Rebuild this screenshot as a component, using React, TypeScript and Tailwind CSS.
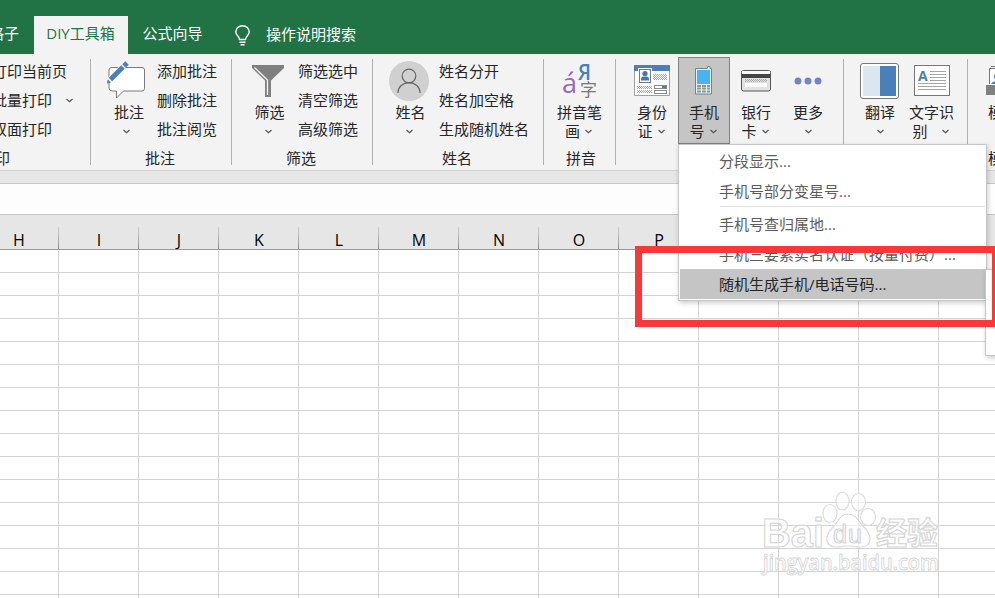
import type { ReactNode } from "react";

const columns = ["H", "I", "J", "K", "L", "M", "N", "O", "P"];
const cells = Array.from({ length: 13 }, (_, i) => i);
const rows = Array.from({ length: 16 }, (_, i) => i);

function Chevron({ className = "" }: { className?: string }) {
    return (
        <svg className={`shrink-0 ${className}`} width="7" height="5" viewBox="0 0 7 5" fill="none">
            <path d="M0.5 1 L3.5 3.8 L6.5 1" stroke="#555" strokeWidth="1.2" />
        </svg>
    );
}

function Divider() {
    return <div className="mt-px h-[106px] w-px shrink-0 bg-[#b1b1b1]" />;
}

interface GroupProps {
    className: string;
    label?: string;
    labelClass?: string;
    children: ReactNode;
}
function Group({ className, label, labelClass = "justify-center", children }: GroupProps) {
    return (
        <section className={`flex shrink-0 flex-col ${className}`}>
            <div className="flex h-[87px] shrink-0">{children}</div>
            <div className={`flex h-[27px] shrink-0 items-center ${labelClass}`}>{label}</div>
        </section>
    );
}

interface BigButtonProps {
    className: string;
    icon: ReactNode;
    label: string;
    labelClass?: string;
    second?: string;
    secondClass?: string;
}
function BigButton({ className, icon, label, labelClass = "", second, secondClass = "gap-[5px] pr-[2px]" }: BigButtonProps) {
    return (
        <button className={`flex shrink-0 flex-col items-center ${className}`}>
            <span className="flex h-[45px] w-full items-center justify-center">{icon}</span>
            <span className={`h-[19px] leading-[19px] ${labelClass}`}>{label}</span>
            <span className={`flex h-[19px] items-center leading-[19px] ${secondClass}`}>
                {second}
                <Chevron />
            </span>
        </button>
    );
}

function TextList({ items, className = "" }: { items: string[]; className?: string }) {
    return (
        <div className={`flex flex-col ${className}`}>
            {items.map((item) => (
                <button key={item} className="h-[29px] pb-[2px] text-left leading-[27px]">{item}</button>
            ))}
        </div>
    );
}

/* ------------------------------------- ICONOS */
function CommentIcon() {
    return (
        <svg className="mb-[2px]" width="40" height="40" viewBox="0 0 40 40" fill="none">
            <path d="M5 7.500h30q2.500 0 2.500 2.500v18.500q0 2.500-2.500 2.500H16.500l-7 7v-7H5q-3-.5-3-3V10q0-2.500 3-2.500z" fill="#fff" stroke="#7a7a7a" />
            <path d="M2 20.500L17 5.500" stroke="#f3f3f3" strokeWidth="6" />
            <path d="M3.500 19.500L16 7" stroke="#4a80b8" strokeWidth="4.800" />
            <path d="M17 6L20 3" stroke="#4a80b8" strokeWidth="4.800" />
            <path d="M0.800 19.500l3 3-4 1z" fill="#4a80b8" />
        </svg>
    );
}

function FilterIcon() {
    return (
        <svg width="32" height="32" viewBox="0 0 32 32">
            <path d="M0 0h32v3L19 15.500V32h-6V15.500L0 3z" fill="#808080" />
            <path d="M2.500 2.500L15.500 15v15" fill="none" stroke="#f3f3f3" strokeWidth="1.300" />
        </svg>
    );
}

function PersonIcon() {
    return (
        <svg width="40" height="40" viewBox="0 0 40 40">
            <circle cx="20" cy="20" r="20" fill="#d0d0d0" />
            <g fill="none" stroke="#666" strokeWidth="1.200">
                <circle cx="20" cy="15" r="6.800" />
                <path d="M9 32v-0.500a11 9.800 0 0 1 22 0v0.500" />
            </g>
        </svg>
    );
}

function PinyinIcon() {
    return (
        <svg width="36" height="38" viewBox="0 0 36 38">
            <text x="0" y="31" fontSize="27" fontFamily="Open Sans" fill="#9966bb">á</text>
            <text x="16" y="18" fontSize="22" fontWeight="600" fontFamily="Open Sans" textLength="13" lengthAdjust="spacingAndGlyphs" fill="#4a80b8">Я</text>
            <text x="18" y="33.500" fontSize="17" fontFamily="Noto Sans CJK SC" fill="#777">字</text>
        </svg>
    );
}

function IdCardIcon() {
    return (
        <svg width="36" height="32" viewBox="0 0 36 32">
            <rect x="0.500" y="0.500" width="35" height="30" fill="#fff" stroke="#a0a0a0" />
            <rect width="36" height="6" fill="#4a80b8" />
            <rect x="4" y="3" width="14" height="15" fill="#fff" />
            <rect x="5.500" y="4.500" width="11" height="13" fill="#fff" stroke="#777" />
            <circle cx="11" cy="8.500" r="2.600" fill="#3f79b3" />
            <path d="M7 15.500v-1.500q0-2.500 2.500-2.500h3q2.500 0 2.500 2.500v1.500z" fill="#3f79b3" />
            <path d="M19 9.500h14M19 11.500h14M19 13.500h14M3 21.500h15M3 23.500h15M3 25.500h15M3 27.500h15" stroke="#a5a5a5" strokeDasharray="1 1" />
            <path d="M20 10.500h13M20 12.500h13M20 14.500h13M4 22.500h14M4 26.500h14" stroke="#a5a5a5" strokeDasharray="1 1" />
            <rect x="20.500" y="20.500" width="12" height="3" fill="#fff" stroke="#888" />
            <rect x="28" y="21" width="4" height="2" fill="#4a80b8" />
            <rect x="20.500" y="25.500" width="12" height="3" fill="#fff" stroke="#888" />
        </svg>
    );
}

function PhoneIcon() {
    return (
        <svg width="18" height="29" viewBox="0 0 18 29">
            <path d="M0.500 2.500h12v-2h2.500v2h1.500v25.500H0.500z" fill="#e8f2f2" stroke="#6f8484" />
            <rect x="2" y="4" width="13" height="14" fill="#49b2f0" />
            <path d="M2 20h4M7 20h4M12 20h3M2 22.500h4M7 22.500h4M12 22.500h3M2 25.500h4M7 25.500h4M12 25.500h3" stroke="#869a98" strokeWidth="2" />
        </svg>
    );
}

function BankCardIcon() {
    return (
        <svg width="30" height="22" viewBox="0 0 30 22">
            <rect x="0.500" y="0.500" width="29" height="20.500" rx="2" fill="#e2e2e2" stroke="#555" />
            <rect x="1" y="1" width="28" height="3" fill="#f8f8f8" />
            <rect x="1" y="4" width="28" height="4" fill="#444" />
            <path d="M4 9.500h22M4 11.500h22" stroke="#aaa" strokeDasharray="1 1" />
            <path d="M5 10.500h21" stroke="#aaa" strokeDasharray="1 1" />
            <rect x="4" y="13" width="22" height="4" fill="#fff" />
        </svg>
    );
}

function MoreIcon() {
    return (
        <svg width="28" height="8" viewBox="0 0 28 8" fill="#7484c1">
            <circle cx="4" cy="4" r="3.500" />
            <circle cx="14" cy="4" r="3.500" />
            <circle cx="24" cy="4" r="3.500" />
        </svg>
    );
}

function TranslateIcon() {
    return (
        <svg className="mr-px" width="39" height="36" viewBox="0 0 39 36">
            <rect x="0.500" y="0.500" width="38" height="35" rx="2.500" fill="#fff" stroke="#777" />
            <rect x="3" y="3" width="17" height="30" fill="#dce6f0" />
            <rect x="20" y="3" width="16" height="30" fill="#4a80b8" />
        </svg>
    );
}

function OcrIcon() {
    return (
        <svg width="36" height="31" viewBox="0 0 36 31">
            <rect x="0.500" y="0.500" width="35" height="30" fill="#fff" stroke="#777" />
            <text x="4" y="16" fontSize="14" fontWeight="700" fontFamily="Open Sans" fill="#4a80b8">A</text>
            <path d="M16 6.500h16M16 9.500h16M16 12.500h16M16 15.500h16M4 18.500h28M4 21.500h28M4 24.500h28" stroke="#a5a5a5" />
        </svg>
    );
}

function StampIcon() {
    return (
        <svg className="shrink-0" width="20" height="30" viewBox="0 0 20 30">
            <path d="M5 0.500h15M3.500 18V2.500H20" fill="none" stroke="#777" />
            <rect x="4" y="3" width="16" height="16" fill="#fff" />
            <path d="M12 7q-4 0-4 3.500t4 4M5 18q1-3 6-3h9v3z" fill="#4a80b8" />
            <rect y="19" width="20" height="10" fill="#808080" />
        </svg>
    );
}

function Watermark() {
    return (
        <svg className="absolute left-[758px] top-[488px]" width="186" height="92" viewBox="0 0 186 92">
            <g fill="#fff" fillOpacity="0.600" stroke="#dcdcdc" strokeWidth="1.200">
                <ellipse cx="72" cy="25.500" rx="7" ry="9" />
                <ellipse cx="84.500" cy="13" rx="6.500" ry="9" />
                <ellipse cx="100.500" cy="14" rx="7" ry="8.500" />
                <ellipse cx="110" cy="29" rx="7.500" ry="8.500" />
                <path d="M90 26c-8 0-9 7-14 12s-8 11-7 15 4 6 9 6 8-1 12-1 8 1 13 1c6 0 9-3 9-8s-3-9-7-13-7-12-15-12z" />
            </g>
            <g fill="#fff" fillOpacity="0.650" stroke="#d6d6d6" strokeWidth="1.200" strokeLinejoin="round" fontFamily="Liberation Sans" fontWeight="700">
                <text x="4" y="59" fontSize="41" textLength="62" lengthAdjust="spacingAndGlyphs">Bai</text>
                <text x="75" y="55" fontSize="25" fontWeight="400" textLength="29">du</text>
                <text x="118" y="56" fontSize="31" fontFamily="Noto Sans CJK SC" textLength="62">经验</text>
                <text x="5" y="82" fontSize="21" fontFamily="Open Sans" fontWeight="600" strokeWidth="0.900" textLength="176" lengthAdjust="spacingAndGlyphs">jingyan.baidu.com</text>
            </g>
        </svg>
    );
}

function PhoneMenu() {
    return (
        <>
            <div className="absolute left-[678px] top-[144px] flex h-[157px] w-[309px] flex-col border border-[#c6c6c6] bg-white p-px text-[#5c5c5c] shadow-[1px_2px_5px_rgba(0,0,0,0.2)]">
                <button className="h-[30px] pl-[39px] text-left leading-[30px]">分段显示...</button>
                <button className="h-[30px] pl-[39px] text-left leading-[30px]">手机号部分变星号...</button>
                <div className="ml-[40px] h-px shrink-0 bg-[#e1e1e1]" />
                <button className="mt-[2px] h-[30px] pl-[39px] text-left leading-[30px]">手机号查归属地...</button>
                <button className="h-[30px] whitespace-nowrap pl-[39px] text-left leading-[30px]">手机三要素实名认证（按量付费）...</button>
                <button className="h-[30px] bg-[#c5c5c5] pl-[39px] text-left leading-[30px] text-[#262626]">随机生成手机/电话号码...</button>
            </div>
            <div className="absolute left-[985px] top-[269px] h-[87px] w-[20px] border border-[#c6c6c6] bg-white shadow-[1px_2px_5px_rgba(0,0,0,0.2)]" />
        </>
    );
}

function App() {
    return (
        <div className="relative flex h-[598px] w-[995px] flex-col overflow-hidden bg-white font-['Open_Sans','Noto_Sans_CJK_SC',sans-serif] text-[15px] text-[#262626]">
            {/* ------------------------------------- PESTAÑAS */}
            <header className="flex h-[54px] shrink-0 items-end bg-[#217346] text-white">
                <div className="flex h-[38px] w-[34px] items-center justify-end whitespace-nowrap pb-[4px] pr-[15px]">方方格子</div>
                <div className="flex h-[38px] w-[94px] items-center justify-center bg-[#f3f3f3] pb-[4px] pr-px text-[#217346]">DIY工具箱</div>
                <div className="flex h-[38px] w-[89px] items-center justify-center pb-[4px]">公式向导</div>
                <div className="flex h-[38px] items-center pl-[18px]">
                    <svg width="15" height="21" viewBox="0 0 15 21" fill="none" stroke="#fff" strokeWidth="1.400">
                        <path d="M4.500 14.500C4.500 11 0.800 10.500 0.800 7a6.700 6.300 0 0 1 13.400 0c0 3.500-3.700 4-3.700 7.500z" />
                        <path d="M4.500 17.300h6M5.500 19.800h4" />
                    </svg>
                    <span className="ml-[16px] pb-px">操作说明搜索</span>
                </div>
            </header>

            {/* ------------------------------------- CINTA */}
            <div className="flex h-[117px] shrink-0 border-b border-[#d0d0d0] bg-[#f3f3f3] pt-1">
                <Group className="w-[90px]" label="打印" labelClass="-ml-[20px]">
                    <TextList className="-ml-[8px] w-[76px] shrink-0 whitespace-nowrap" items={["打印当前页", "批量打印", "双面打印"]} />
                    <Chevron className="-ml-[2px] mt-[40px]" />
                </Group>
                <Divider />
                <Group className="w-[140px]" label="批注" labelClass="justify-center pr-[2px]">
                    <BigButton className="w-[66px] pl-[5px]" icon={<CommentIcon />} label="批注" labelClass="pl-[5px]" secondClass="" />
                    <TextList items={["添加批注", "删除批注", "批注阅览"]} />
                </Group>
                <Divider />
                <Group className="w-[140px]" label="筛选" labelClass="justify-center pr-[2px]">
                    <BigButton className="w-[66px] pl-[6px]" icon={<FilterIcon />} label="筛选" labelClass="pl-[3px]" secondClass="" />
                    <TextList items={["筛选选中", "清空筛选", "高级筛选"]} />
                </Group>
                <Divider />
                <Group className="w-[170px]" label="姓名" labelClass="justify-center pr-[2px]">
                    <BigButton className="w-[66px] pl-[6px]" icon={<PersonIcon />} label="姓名" labelClass="pl-[3px]" secondClass="" />
                    <TextList items={["姓名分开", "姓名加空格", "生成随机姓名"]} />
                </Group>
                <Divider />
                <Group className="w-[71px]" label="拼音" labelClass="justify-center pl-[3px]">
                    <BigButton className="w-[71px]" icon={<PinyinIcon />} label="拼音笔" second="画" />
                </Group>
                <Divider />
                <Group className="w-[227px]">
                    <BigButton className="ml-[10px] w-[52px]" icon={<IdCardIcon />} label="身份" second="证" />
                    <BigButton className="-mt-px h-[87px] w-[52px] border border-[#818181] bg-[#c5c5c5]" icon={<PhoneIcon />} label="手机" second="号" />
                    <BigButton className="w-[52px]" icon={<BankCardIcon />} label="银行" second="卡" />
                    <BigButton className="w-[52px]" icon={<MoreIcon />} label="更多" secondClass="" />
                </Group>
                <Divider />
                <Group className="w-[123px]">
                    <BigButton className="ml-[10px] w-[52px]" icon={<TranslateIcon />} label="翻译" secondClass="" />
                    <BigButton className="w-[51px]" icon={<OcrIcon />} label="文字识" second="别" secondClass="gap-[14px] pr-[2px]" />
                </Group>
                <Divider />
                <Group className="w-[60px]" label="模板" labelClass="pl-[20px] whitespace-nowrap">
                    <BigButton className="ml-[18px] w-[40px] whitespace-nowrap" icon={<span className="w-full"><StampIcon /></span>} label="模板" labelClass="self-start pl-[2px]" secondClass="" />
                </Group>
            </div>

            {/* ------------------------------------- BARRA DE FÓRMULAS */}
            <div className="h-[13px] shrink-0 border-b border-[#c6c6c6] bg-[#e6e6e6]" />
            <div className="h-[31px] shrink-0 border-b border-[#c6c6c6] bg-[#fdfdfd]" />

            {/* ------------------------------------- HOJA */}
            <div className="flex h-[35px] shrink-0 items-end border-b border-[#999] bg-[#e6e6e6] pt-3 text-black">
                {cells.map((i) => (
                    <div key={i} className="flex h-[22px] w-[80px] shrink-0 first:-ml-[21px]">
                        <span className="flex-1 pl-px text-center text-[16px] leading-[26px]">{columns[i]}</span>
                        <span className="w-px bg-linear-to-b from-[#cfcfcf] to-[#909090]" />
                    </div>
                ))}
            </div>
            <div>
                {rows.map((row) => (
                    <div key={row} className="flex h-[23px]">
                        {cells.map((i) => (
                            <div key={i} className="w-[80px] shrink-0 border-b border-r border-[#d4d4d4] first:-ml-[21px]" />
                        ))}
                    </div>
                ))}
            </div>

            <Watermark />
            <PhoneMenu />
            {/* ------------------------------------- MARCO ROJO */}
            <div className="absolute left-[635px] top-[246px] h-[81px] w-[364px] border-[7px] border-[#fb3737]" />
        </div>
    );
}

export default App;
